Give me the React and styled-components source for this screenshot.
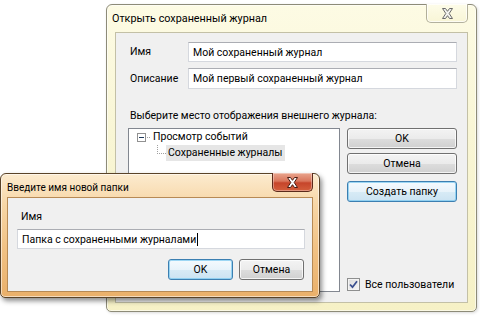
import React from 'react';
import styled, { createGlobalStyle } from 'styled-components';

const Global = createGlobalStyle`
  html, body { margin: 0; padding: 0; background: #fff; }
  body { font-family: Roboto, "Noto Sans", sans-serif; font-size: 10.5px; color: #000; }
  * { box-sizing: border-box; }
`;

const Desktop = styled.div`
  position: relative;
  width: 480px;
  height: 324px;
  overflow: hidden;
  background: #fff;
`;

const Window = styled.div`
  position: absolute;
  left: ${p => p.$x}px;
  top: ${p => p.$y}px;
  width: ${p => p.$w}px;
  height: ${p => p.$h}px;
  display: flex;
  flex-direction: column;
  border: 1px solid ${p => (p.$active ? '#5a4328' : '#8d8b78')};
  border-radius: 6px 6px 5px 5px;
  background: ${p =>
    p.$active
      ? 'linear-gradient(180deg, #fcebcf 0%, #f7d6a6 25%, #f1c285 60%, #eab06a 100%)'
      : 'linear-gradient(180deg, #fdfbe4 0%, #f9f6d6 40%, #f6f1c6 100%)'};
  box-shadow: inset 0 0 0 1px rgba(255, 255, 255, 0.55)
    ${p => (p.$active ? ', 2px 3px 5px rgba(0,0,0,0.45)' : ', 1px 1px 3px rgba(0,0,0,0.15)')};
`;

const TitleBar = styled.div`
  height: ${p => p.$h}px;
  display: flex;
  align-items: flex-start;
  padding: 0 ${p => p.$side}px 0 ${p => p.$tx}px;
`;

const Title = styled.span`
  padding-top: ${p => p.$ty}px;
  line-height: 16px;
  font-size: ${p => p.$size}px;
  white-space: nowrap;
`;

const CloseButton = styled.div`
  margin-left: auto;
  margin-top: -1px;
  width: ${p => p.$w}px;
  height: 19px;
  display: flex;
  align-items: center;
  justify-content: center;
  border: 1px solid ${p => (p.$active ? '#5b2a1b' : 'rgba(90, 88, 70, 0.45)')};
  border-top: none;
  border-radius: 0 0 5px 5px;
  background: ${p =>
    p.$active
      ? 'linear-gradient(180deg, #e9a58e 0%, #d9765c 45%, #c6452b 55%, #d45f3c 100%)'
      : 'linear-gradient(180deg, #fdfce9 0%, #f8f5d6 100%)'};
  box-shadow: inset 0 0 0 1px rgba(255, 255, 255, ${p => (p.$active ? 0.35 : 0.7)});
`;

const Client = styled.div`
  flex: 1;
  margin: 0 ${p => p.$side}px ${p => p.$bottom}px;
  background: #f0f0f0;
  border: 1px solid ${p => (p.$active ? '#b78a55' : '#c3c0a6')};
  display: flex;
  flex-direction: column;
  padding: ${p => p.$pad};
`;

const FormGrid = styled.div`
  display: grid;
  grid-template-columns: 60px 1fr;
  row-gap: 6px;
  align-items: center;
`;

const Label = styled.span`
  padding-left: ${p => p.$indent || 0}px;
  line-height: 16px;
  white-space: nowrap;
`;

const TextBox = styled.div`
  height: ${p => p.$h || 20}px;
  display: flex;
  align-items: center;
  padding-left: 4px;
  background: #fff;
  border: 1px solid #d5d8de;
  border-top-color: #abadb3;
  white-space: nowrap;
  overflow: hidden;
`;

const Caret = styled.span`
  display: inline-block;
  width: 1px;
  height: 13px;
  background: #000;
  margin-left: 1px;
`;

const Prompt = styled.div`
  margin-top: 19px;
  line-height: 16px;
  padding-left: 2px;
  white-space: nowrap;
`;

const PickRow = styled.div`
  margin-top: 4px;
  display: flex;
  gap: 7px;
  height: 164px;
`;

const TreeBox = styled.div`
  flex: 0 0 212px;
  background: #fff;
  border: 1px solid #828790;
  display: flex;
  flex-direction: column;
`;

const TreeRow = styled.div`
  height: 16px;
  display: flex;
  align-items: stretch;
  padding-left: ${p => p.$indent}px;
`;

const TreeText = styled.span`
  line-height: 16px;
  padding: 0 2px;
  white-space: nowrap;
  background: ${p => (p.$selected ? '#e6e6e6' : 'transparent')};
`;

const ButtonColumn = styled.div`
  flex: 1;
  min-width: 0;
  display: flex;
  flex-direction: column;
`;

const Button = styled.div`
  width: ${p => (p.$w ? `${p.$w}px` : 'auto')};
  height: 21px;
  margin-top: ${p => p.$mt || 0}px;
  display: flex;
  align-items: center;
  justify-content: center;
  border: 1px solid ${p => (p.$focus ? '#3c7fb1' : '#707070')};
  border-radius: 3px;
  background: ${p =>
    p.$focus
      ? 'linear-gradient(180deg, #f4fafe 0%, #e8f3fa 50%, #d8ebf6 51%, #cbe3f2 100%)'
      : 'linear-gradient(180deg, #f3f3f3 0%, #ebebeb 50%, #dddddd 51%, #d0d0d0 100%)'};
  box-shadow: inset 0 0 0 1px ${p => (p.$focus ? 'rgba(120, 200, 240, 0.7)' : 'rgba(255,255,255,0.75)')};
  white-space: nowrap;
`;

const Spacer = styled.div`
  flex: 1;
`;

const CheckRow = styled.div`
  display: flex;
  align-items: center;
  gap: 5px;
  height: 13px;
  margin-bottom: 1px;
`;

const CheckBox = styled.div`
  flex: 0 0 13px;
  height: 13px;
  border: 1px solid #8e8f8f;
  background: linear-gradient(135deg, #dcdcdc 0%, #f6f6f6 100%);
  box-shadow: inset 0 0 0 1px #f4f4f4;
  display: flex;
  align-items: center;
  justify-content: center;
`;

const DialogFooter = styled.div`
  margin-top: 10px;
  display: flex;
  justify-content: flex-end;
  gap: 6px;
  padding-right: 1px;
`;

const NameLabel = styled.div`
  line-height: 16px;
  padding-left: 4px;
  margin-bottom: 4px;
`;

const CloseGlyph = ({ active }) => (
  <svg width="13" height="11" viewBox="0 0 13 11">
    <path
      d="M1.5,0.5 L4.5,0.5 L6.5,3.3 L8.5,0.5 L11.5,0.5 L8.2,5.5 L11.5,10.5 L8.5,10.5 L6.5,7.7 L4.5,10.5 L1.5,10.5 L4.8,5.5 Z"
      fill={active ? '#ffffff' : '#f4f4f0'}
      stroke={active ? '#4a1b10' : '#6a6a6a'}
      strokeWidth="1"
      strokeLinejoin="round"
    />
  </svg>
);

const ExpandGlyph = () => (
  <svg width="14" height="16" viewBox="0 0 14 16">
    <rect x="0.5" y="4.5" width="8" height="8" fill="#fff" stroke="#919191" />
    <line x1="2" y1="8.5" x2="7" y2="8.5" stroke="#1e395b" />
    <line x1="10" y1="8.5" x2="14" y2="8.5" stroke="#a0a0a0" strokeDasharray="1 1" />
  </svg>
);

const ChildLines = () => (
  <svg width="10" height="16" viewBox="0 0 10 16">
    <line x1="1.5" y1="0" x2="1.5" y2="9" stroke="#a0a0a0" strokeDasharray="1 1" />
    <line x1="3" y1="8.5" x2="10" y2="8.5" stroke="#a0a0a0" strokeDasharray="1 1" />
  </svg>
);

const CheckMark = () => (
  <svg width="9" height="9" viewBox="0 0 9 9">
    <path d="M1,4.5 L3.5,7.2 L8,1.3" fill="none" stroke="#3a4f8f" strokeWidth="1.8" />
  </svg>
);

export default function App() {
  return (
    <>
      <Global />
      <Desktop>
        <Window $x={106} $y={4} $w={371} $h={308}>
          <TitleBar $h={27} $tx={5} $side={8}>
            <Title $ty={6} $size={10.8}>Открыть сохраненный журнал</Title>
            <CloseButton $w={42}>
              <CloseGlyph />
            </CloseButton>
          </TitleBar>
          <Client $side={8} $bottom={8} $pad="9px 10px 10px 12px">
            <FormGrid>
              <Label $indent={2}>Имя</Label>
              <TextBox>Мой сохраненный журнал</TextBox>
              <Label $indent={2}>Описание</Label>
              <TextBox $h={21}>Мой первый сохраненный журнал</TextBox>
            </FormGrid>
            <Prompt>Выберите место отображения внешнего журнала:</Prompt>
            <PickRow>
              <TreeBox>
                <TreeRow $indent={8}>
                  <ExpandGlyph />
                  <TreeText>Просмотр событий</TreeText>
                </TreeRow>
                <TreeRow $indent={27}>
                  <ChildLines />
                  <TreeText $selected>Сохраненные журналы</TreeText>
                </TreeRow>
              </TreeBox>
              <ButtonColumn>
                <Button>OK</Button>
                <Button $mt={4}>Отмена</Button>
                <Button $mt={7} $focus>Создать папку</Button>
                <Spacer />
                <CheckRow>
                  <CheckBox>
                    <CheckMark />
                  </CheckBox>
                  <Label>Все пользователи</Label>
                </CheckRow>
              </ButtonColumn>
            </PickRow>
          </Client>
        </Window>

        <Window $active $x={0} $y={173} $w={320} $h={125}>
          <TitleBar $h={24} $tx={6} $side={6}>
            <Title $ty={6} $size={10}>Введите имя новой папки</Title>
            <CloseButton $active $w={41}>
              <CloseGlyph active />
            </CloseButton>
          </TitleBar>
          <Client $active $side={6} $bottom={5} $pad="11px 7px 11px 9px">
            <NameLabel>Имя</NameLabel>
            <TextBox>
              Папка с сохраненными журналами
              <Caret />
            </TextBox>
            <DialogFooter>
              <Button $w={65} $focus>OK</Button>
              <Button $w={65}>Отмена</Button>
            </DialogFooter>
          </Client>
        </Window>
      </Desktop>
    </>
  );
}
